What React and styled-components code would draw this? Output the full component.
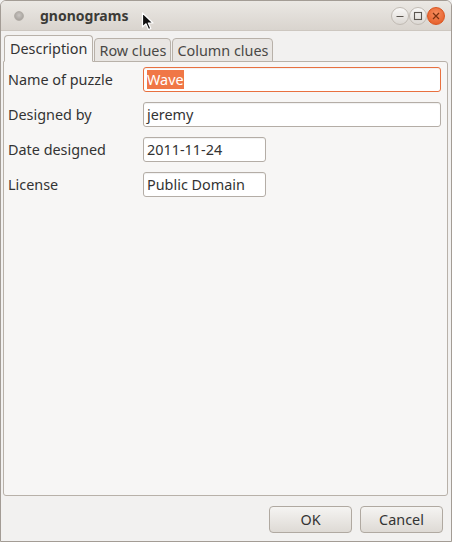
import React from "react";
import styled, { createGlobalStyle } from "styled-components";

const GlobalStyle = createGlobalStyle`
  html, body {
    margin: 0;
    padding: 0;
    background: #f2f1f0;
  }
  body {
    font-family: "Noto Sans", "DejaVu Sans", sans-serif;
  }
`;

const FIELDS = [
  { label: "Name of puzzle", value: "Wave", wide: true, focused: true },
  { label: "Designed by", value: "jeremy", wide: true },
  { label: "Date designed", value: "2011-11-24" },
  { label: "License", value: "Public Domain" },
];

const TABS = ["Description", "Row clues", "Column clues"];

const App = () => {
  return (
    <>
      <GlobalStyle />
      <Window>
        <TitleBar>
          <MenuDot />
          <Title>gnonograms</Title>
          <Cursor viewBox="0 0 13 19" width="13" height="19">
            <path
              d="M1.5 1 L1.5 15 L5 11.8 L7.5 17.5 L9.8 16.5 L7.3 11 L12 11 Z"
              fill="#111"
              stroke="#fff"
              strokeWidth="1.2"
              strokeLinejoin="round"
            />
          </Cursor>
          <Controls>
            <WinButton>
              <svg width="10" height="10" viewBox="0 0 10 10">
                <line x1="1.5" y1="5.5" x2="8.5" y2="5.5" stroke="#5a554f" strokeWidth="1.2" />
              </svg>
            </WinButton>
            <WinButton>
              <svg width="10" height="10" viewBox="0 0 10 10">
                <rect x="1.5" y="1.5" width="7" height="7" fill="none" stroke="#5a554f" strokeWidth="1.1" />
              </svg>
            </WinButton>
            <WinButton close>
              <svg width="10" height="10" viewBox="0 0 10 10">
                <path d="M2 2 L8 8 M8 2 L2 8" stroke="#7a3010" strokeWidth="1.2" />
              </svg>
            </WinButton>
          </Controls>
        </TitleBar>

        <Body>
          <Notebook>
            <TabRow>
              {TABS.map((t, i) => (
                <Tab key={t} active={i === 0}>
                  {t}
                </Tab>
              ))}
            </TabRow>
            <Panel>
              <Form>
                {FIELDS.map((f) => (
                  <FieldRow key={f.label}>
                    <Label>{f.label}</Label>
                    <Entry wide={f.wide} focused={f.focused}>
                      {f.focused ? <Selected>{f.value}</Selected> : f.value}
                    </Entry>
                  </FieldRow>
                ))}
              </Form>
            </Panel>
          </Notebook>

          <ButtonBar>
            <PushButton>OK</PushButton>
            <PushButton>Cancel</PushButton>
          </ButtonBar>
        </Body>
      </Window>
    </>
  );
};

const Window = styled.div`
  width: 452px;
  height: 542px;
  box-sizing: border-box;
  border: 1px solid #a39c95;
  border-radius: 6px 6px 0 0;
  background: #f2f1f0;
  display: flex;
  flex-direction: column;
  overflow: hidden;
  color: #333;
`;

const TitleBar = styled.div`
  height: 29px;
  flex: none;
  display: flex;
  align-items: center;
  position: relative;
  background: linear-gradient(#ebe8e4, #d9d4ce);
  border-bottom: 1px solid #cdc7c0;
  padding: 0 6px 0 13px;
`;

const MenuDot = styled.div`
  width: 10px;
  height: 10px;
  border-radius: 50%;
  background: radial-gradient(circle at 50% 40%, #c9c5c1, #9d9893);
  border: 1px solid #b3aea8;
  box-sizing: border-box;
`;

const Title = styled.div`
  margin-left: 16px;
  font-weight: bold;
  font-size: 14px;
  color: #3c3b37;
`;

const Cursor = styled.svg`
  position: absolute;
  left: 140px;
  top: 11px;
`;

const Controls = styled.div`
  margin-left: auto;
  display: flex;
  gap: 0;
`;

const WinButton = styled.div`
  width: 18px;
  height: 18px;
  border-radius: 50%;
  display: flex;
  align-items: center;
  justify-content: center;
  box-sizing: border-box;
  background: ${(p) =>
    p.close
      ? "radial-gradient(circle at 50% 35%, #f58d5f, #e4561f)"
      : "linear-gradient(#f9f8f7, #dcd8d3)"};
  border: 1px solid ${(p) => (p.close ? "#d9541f" : "#c1bbb4")};
`;

const Body = styled.div`
  flex: 1;
  display: flex;
  flex-direction: column;
  padding: 4px 3px 0 2px;
  min-height: 0;
`;

const Notebook = styled.div`
  flex: 1;
  display: flex;
  flex-direction: column;
  min-height: 0;
`;

const TabRow = styled.div`
  display: flex;
  align-items: flex-end;
  gap: 1px;
  padding-left: 1px;
  height: 27px;
  position: relative;
  z-index: 1;
  margin-bottom: -1px;
`;

const Tab = styled.div`
  box-sizing: border-box;
  height: ${(p) => (p.active ? "27px" : "24px")};
  padding: 0 ${(p) => (p.active ? "5px" : "4px")};
  display: flex;
  align-items: center;
  font-size: 14.4px;
  color: ${(p) => (p.active ? "#333" : "#4a4845")};
  background: ${(p) => (p.active ? "#f7f6f5" : "#e9e6e3")};
  border: 1px solid #b8b1a9;
  border-bottom: ${(p) => (p.active ? "1px solid #f7f6f5" : "1px solid #b8b1a9")};
  border-radius: 4px 4px 0 0;
`;

const Panel = styled.div`
  flex: 1;
  background: #f7f6f5;
  border: 1px solid #b8b1a9;
  border-radius: 0 3px 3px 3px;
  padding: 5px 6px 0 4px;
`;

const Form = styled.div`
  display: flex;
  flex-direction: column;
  gap: 10px;
`;

const FieldRow = styled.div`
  display: flex;
  align-items: center;
`;

const Label = styled.div`
  width: 135px;
  font-size: 14.4px;
  color: #333;
`;

const Entry = styled.div`
  box-sizing: border-box;
  width: ${(p) => (p.wide ? "298px" : "123px")};
  height: 25px;
  background: #fff;
  border: 1px solid ${(p) => (p.focused ? "#e8703f" : "#b4ada6")};
  border-radius: 3px;
  box-shadow: inset 0 1px 1px rgba(0, 0, 0, 0.06);
  display: flex;
  align-items: center;
  padding: 0 3px;
  font-size: 14.4px;
  color: #333;
`;

const Selected = styled.span`
  background: #f07746;
  color: #fff;
  line-height: 19px;
`;

const ButtonBar = styled.div`
  height: 45px;
  flex: none;
  display: flex;
  justify-content: flex-end;
  align-items: center;
  gap: 8px;
  padding: 0 5px 0 0;
`;

const PushButton = styled.div`
  box-sizing: border-box;
  width: 83px;
  height: 27px;
  border: 1px solid #b0a9a1;
  border-radius: 4px;
  background: linear-gradient(#f5f4f2, #dedad5);
  display: flex;
  align-items: center;
  justify-content: center;
  font-size: 14.4px;
  color: #333;
  margin-top: 1px;
`;

export default App;
